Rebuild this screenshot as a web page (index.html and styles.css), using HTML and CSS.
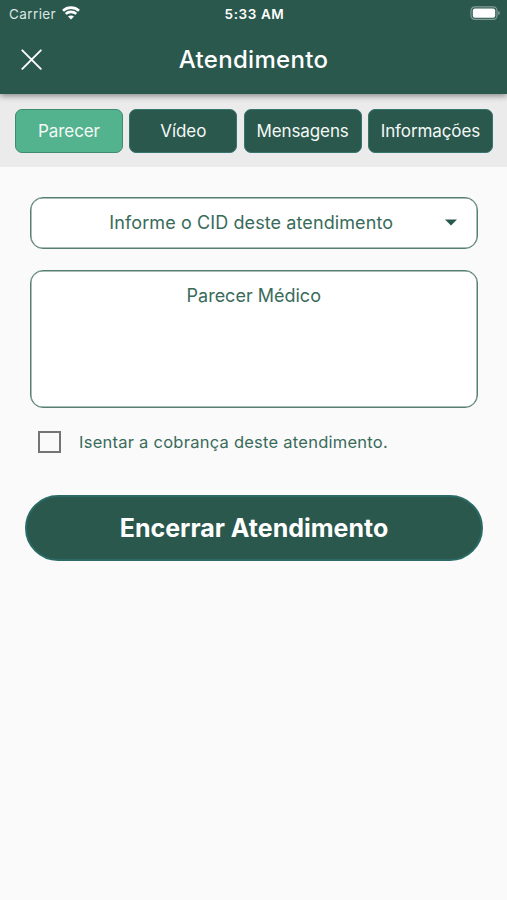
FILE: index.html
```html
<!DOCTYPE html>
<html lang="pt-BR">
<head>
<meta charset="utf-8">
<title>Atendimento</title>
<link rel="stylesheet" href="styles.css">
</head>
<body>
<header class="header">
  <div class="status">
    <div class="carrier"><span>Carrier</span>
      <svg class="wifi" width="18" height="14" viewBox="0 0 18 14" fill="none" stroke="#fff" stroke-width="2.6"><path d="M1 4.700C5.500.6 12.500.6 17 4.700M3.700 7.900c2.900-2.700 7.700-2.700 10.600 0"/><path d="M6 10.600c1.700-1.500 4.300-1.500 6 0L9 13.600z" fill="#fff" stroke="none"/></svg>
    </div>
    <span class="time">5:33 AM</span>
    <svg class="battery" width="30" height="14" viewBox="0 0 30 14"><rect x="1" y=".9" width="26" height="12.500" rx="3.800" fill="none" stroke="#fff" stroke-opacity=".42" stroke-width="1.200"/><rect x="2.800" y="2.600" width="22.400" height="9.200" rx="2" fill="#fff"/><path d="M28.300 5v4.200q1.500-.7 1.500-2.100T28.300 5z" fill="#fff" fill-opacity=".48"/></svg>
  </div>
  <div class="appbar">
    <svg class="close" width="22" height="22" viewBox="0 0 22 22" stroke="#fff" stroke-width="1.900" stroke-linecap="round"><path d="M1.300 1.300l18.500 18.500M19.800 1.300L1.300 19.800"/></svg>
    <h1 class="title">Atendimento</h1>
  </div>
</header>
<nav class="tabs">
  <button class="tab active">Parecer</button>
  <button class="tab">Vídeo</button>
  <button class="tab">Mensagens</button>
  <button class="tab">Informações</button>
</nav>
<main class="form">
  <div class="field select"><span>Informe o CID deste atendimento</span>
    <svg class="caret" width="12" height="7" viewBox="0 0 12 7"><path d="M0 .5h12l-6 6z" fill="#28574c"/></svg>
  </div>
  <div class="field report"><span>Parecer Médico</span></div>
  <label class="check"><span class="box"></span><span class="checktext">Isentar a cobrança deste atendimento.</span></label>
  <button class="submit">Encerrar Atendimento</button>
</main>
</body>
</html>
```
FILE: styles.css
```css
* { box-sizing: border-box; }
body { margin: 0; min-height: 900px; background: #fafafa; font-family: Inter, "Liberation Sans", sans-serif; color: #396b5a; }
button { font-family: inherit; }
.header { position: relative; height: 94px; background: #2a584d; color: #fff; box-shadow: 0 2px 6px rgba(0,0,0,.42); }
.status { height: 27px; padding: 0 7px 0 9px; display: grid; grid-template-columns: 1fr auto 1fr; align-items: center; }
.carrier { display: flex; align-items: center; gap: 6px; font-size: 13.5px; letter-spacing: .4px; color: #dce6e3; }
.wifi { position: relative; top: -1px; }
.time { font-size: 13.5px; font-weight: 600; letter-spacing: .6px; }
.battery { justify-self: end; position: relative; top: -1px; }
.appbar { height: 66px; padding: 0 21px; display: grid; grid-template-columns: 22px 1fr 22px; align-items: center; }
.title { margin: 0; text-align: center; font-size: 24px; font-weight: 500; letter-spacing: .3px; line-height: 32px; }
.tabs { height: 73px; padding: 15px 14px 0 15px; display: grid; grid-template-columns: 108px 108px 118px 125px; column-gap: 6.300px; align-items: start; background: #ebebeb; }
.tab { height: 44px; padding: 0; border: 1px solid #34756d; border-radius: 7px; background: #2a584d; color: #f4f8f6; font-size: 17px; letter-spacing: -.1px; }
.active { background: #53b38e; border-color: #3f8b71; }
.form { padding: 30px 25px 0; }
.field { margin: 0 4.500px 0 5px; border: 1px solid #577f71; border-radius: 13px; background: #fff; box-shadow: inset 0 0 0 .5px #577f71; font-size: 18px; letter-spacing: .1px; }
.select { height: 52px; padding: 0 20px 1px 46px; display: grid; grid-template-columns: 1fr 12px; column-gap: 19px; align-items: center; text-align: center; }
.report { height: 138px; margin-top: 21px; padding-top: 13px; text-align: center; line-height: 24px; letter-spacing: 0; }
.check { height: 22px; margin: 23px 0 0 13px; display: flex; align-items: center; gap: 18px; font-size: 16.500px; letter-spacing: .25px; }
.box { width: 23px; height: 22px; border: 2px solid #747474; }
.checktext { padding-bottom: 1px; }
.submit { display: block; width: 458px; height: 66px; margin-top: 42px; border: 2px solid #2c6b65; border-radius: 33px; background: #2a584d; color: #fff; font-size: 25px; font-weight: 700; }
```
